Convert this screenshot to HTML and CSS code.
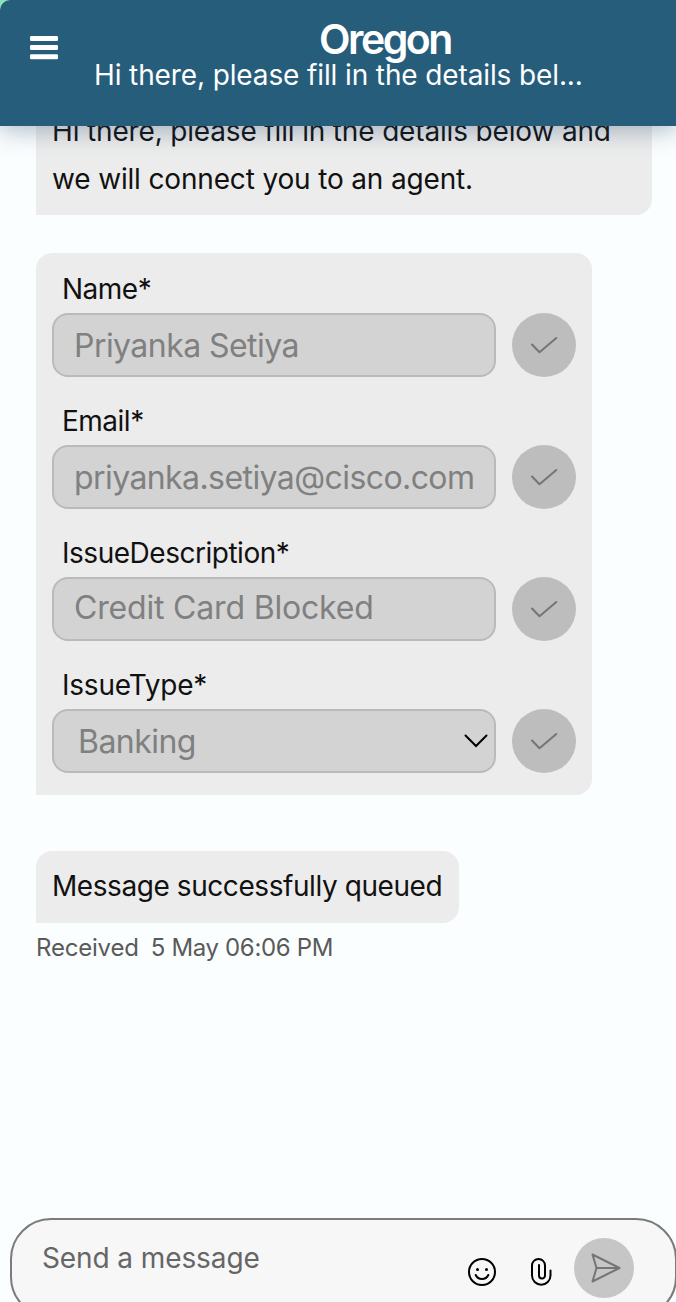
FILE: index.html
```html
<!DOCTYPE html>
<html lang="en">
<head>
<meta charset="utf-8">
<title>Oregon chat</title>
<link rel="stylesheet" href="styles.css">
</head>
<body>
<div class="chat">
  <header class="header">
    <svg class="menu" viewBox="0 0 28 24" width="28" height="24" fill="#fff"><rect width="28" height="5" rx="1.2"/><rect y="9" width="28" height="5" rx="1.2"/><rect y="18.200" width="28" height="5" rx="1.2"/></svg>
    <div class="heading">
      <h1 class="title">Oregon</h1>
      <p class="subtitle">Hi there, please fill in the details bel...</p>
    </div>
  </header>
  <main class="messages">
    <div class="bubble greeting"><span class="line-one">Hi there, please fill in the details below and</span><br><span class="line-two">we will connect you to an agent.</span></div>
    <form class="bubble form">
      <div class="field">
        <label class="label name">Name*</label>
        <div class="row"><div class="input person">Priyanka Setiya</div><div class="check"><svg viewBox="0 0 64 64"><path d="M20 31.500 27.500 39.300 44.300 25"/></svg></div></div>
      </div>
      <div class="field">
        <label class="label email">Email*</label>
        <div class="row"><div class="input address">priyanka.setiya@cisco.com</div><div class="check"><svg viewBox="0 0 64 64"><path d="M20 31.500 27.500 39.300 44.300 25"/></svg></div></div>
      </div>
      <div class="field">
        <label class="label description">IssueDescription*</label>
        <div class="row"><div class="input issue">Credit Card Blocked</div><div class="check"><svg viewBox="0 0 64 64"><path d="M20 31.500 27.500 39.300 44.300 25"/></svg></div></div>
      </div>
      <div class="field">
        <label class="label type">IssueType*</label>
        <div class="row"><div class="input select"><span>Banking</span><svg class="chevron" viewBox="0 0 24 14" width="24" height="14"><path d="M1.500 1.500 12 12 22.500 1.500"/></svg></div><div class="check"><svg viewBox="0 0 64 64"><path d="M20 31.500 27.500 39.300 44.300 25"/></svg></div></div>
      </div>
    </form>
    <div class="bubble queued"><span>Message successfully queued</span></div>
    <div class="meta"><span class="status">Received</span><span class="time">5 May 06:06 PM</span></div>
  </main>
  <footer class="composer">
    <span class="placeholder">Send a message</span>
    <svg class="smile" viewBox="0 0 28 28" width="28" height="28"><circle cx="14" cy="14" r="13"/><path d="M7.700 17C10.200 22.300 17.800 22.300 20.300 17"/><circle class="eye" cx="9.500" cy="11.500" r="1.500"/><circle class="eye" cx="18.500" cy="11.500" r="1.500"/></svg>
    <svg class="clip" viewBox="0 0 22 30" width="22" height="30"><path d="M8 8V18.500a3 3 0 0 0 6 0V8.500a6.500 6.500 0 0 0-13 0V18.500a9.250 9.250 0 0 0 18.500 0v-5"/></svg>
    <div class="send"><svg viewBox="0 0 60 60"><path d="M18.500 16.500 45.500 30 18.500 43.500 22.500 30ZM22.500 30H45.500"/></svg></div>
  </footer>
</div>
</body>
</html>
```
FILE: styles.css
```css
* { box-sizing: border-box; }
body { margin: 0; background: #89e6b4; font-family: Inter, "Liberation Sans", sans-serif; overflow: hidden; }
.chat { display: flex; flex-direction: column; height: 1302px; overflow: hidden; background: #fbfeff; border-top-left-radius: 10px; color: #111; font-size: 28px; }
.header { flex: none; height: 126px; background: #265d7b; color: #fff; display: flex; padding: 0 0 0 30px; position: relative; z-index: 1; box-shadow: 0 4px 24px rgba(38, 72, 105, .38); }
.menu { margin-top: 36px; flex: none; }
.heading { flex: 1; padding-left: 36px; white-space: nowrap; }
.title { margin: 19px 0 0; text-align: center; font-size: 41px; line-height: 40px; font-weight: 600; letter-spacing: -2.500px; }
.subtitle { margin: 0; line-height: 32px; font-size: 28px; letter-spacing: -.12px; }
.messages { flex: 1; min-height: 0; padding: 0 24px 0 36px; white-space: nowrap; }
.bubble { background: #ececec; border-radius: 16px 16px 16px 0; }
.greeting { margin-top: -31px; height: 120px; padding: 12px 16px; line-height: 48px; letter-spacing: -.16px; }
.form { margin-top: 38px; width: 556px; height: 542px; padding: 18px 16px 0; display: flex; flex-direction: column; gap: 26px; }
.label { display: block; height: 42px; line-height: 36px; padding-left: 10px; letter-spacing: -.5px; }
.description { letter-spacing: -.48px; }
.type { letter-spacing: -.22px; }
.row { display: flex; gap: 16px; }
.input { width: 444px; height: 64px; border: 2px solid #bababa; border-radius: 16px; background: #d3d3d3; color: #808080; padding-left: 20px; line-height: 61px; font-size: 32px; letter-spacing: -.55px; }
.address { letter-spacing: -.58px; }
.issue { line-height: 57px; letter-spacing: -.18px; }
.select { display: flex; align-items: center; justify-content: space-between; padding: 0 6px 0 24px; }
.check { width: 64px; height: 64px; border-radius: 50%; background: #bdbdbd; }
.check svg, .send svg { display: block; fill: none; stroke: #757575; stroke-width: 2; stroke-linecap: round; stroke-linejoin: round; }
.chevron { fill: none; stroke: #000; stroke-width: 2; stroke-linecap: round; }
.queued { margin-top: 56px; width: 423px; height: 72px; padding-left: 16px; line-height: 71px; letter-spacing: -.43px; }
.meta { display: flex; gap: 12px; color: #5a5a5a; font-size: 24px; line-height: 30px; margin-top: 10px; }
.status { letter-spacing: -.2px; }
.time { letter-spacing: -.34px; }
.composer { flex: none; display: flex; align-items: center; width: 667px; height: 100px; margin: 0 0 -16px 10px; border: 2px solid #7b7b7b; border-radius: 41px; background: #f7f7f7; padding-left: 30px; }
.placeholder { width: 426px; padding-bottom: 21px; color: #666; white-space: nowrap; letter-spacing: -.1px; }
.smile, .clip { margin-top: 8px; fill: none; stroke: #000; stroke-width: 2; stroke-linecap: round; flex: none; }
.smile .eye { fill: #000; stroke: none; }
.clip { margin-left: 35px; }
.send { width: 60px; height: 60px; flex: none; margin-left: 21px; border-radius: 50%; background: #c6c6c6; }
```
